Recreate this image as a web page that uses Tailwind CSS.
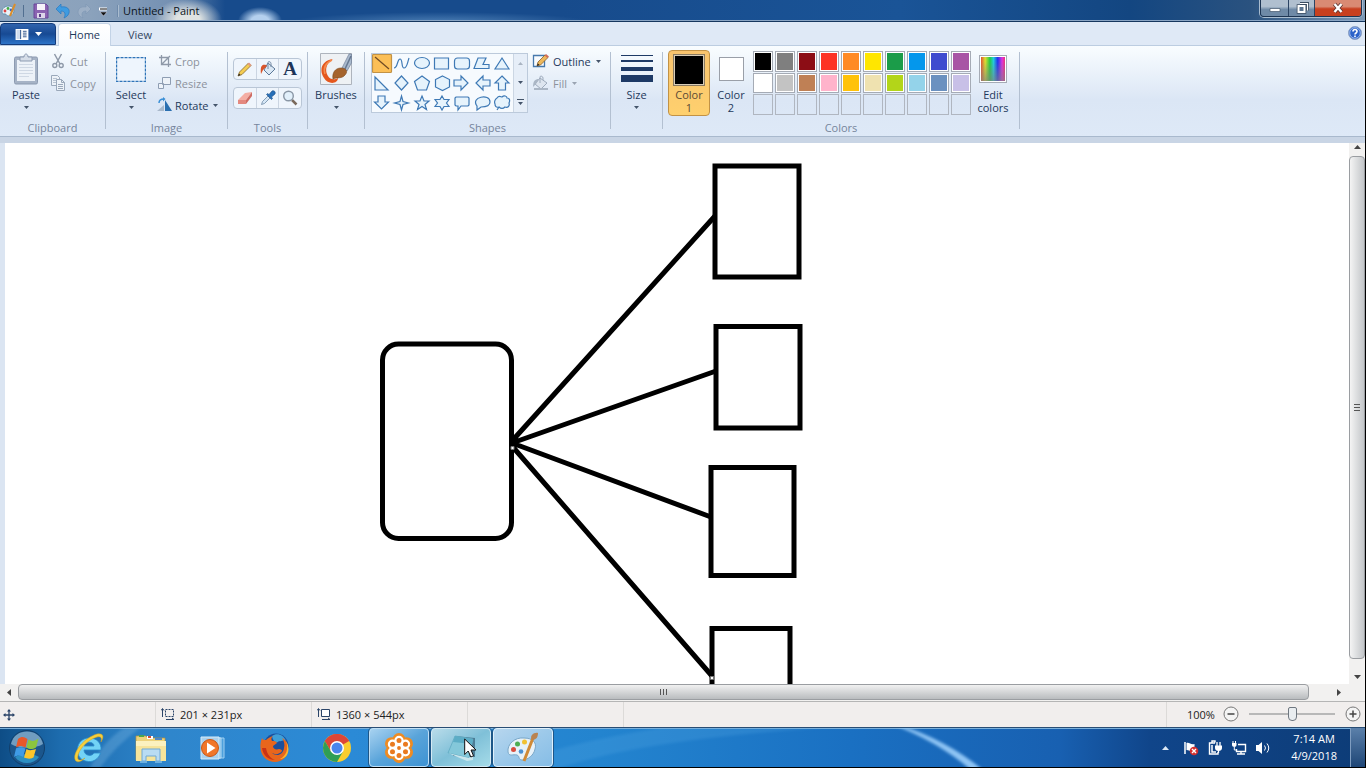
<!DOCTYPE html>
<html lang="en">
<head>
<meta charset="utf-8">
<title>Untitled - Paint</title>
<script src="https://cdn.jsdelivr.net/npm/@tailwindcss/browser@4"></script>
</head>
<body class="bg-black">
<div class="flex h-screen flex-col overflow-hidden bg-black font-['Open_Sans',sans-serif] text-[11px] leading-[13px] text-[#1e395b] select-none">
<div class="mr-px flex min-h-0 flex-1 flex-col">

  <!-- Title bar -->
  <header class="flex h-[22px] shrink-0 items-center overflow-hidden border-b border-[#16375f] bg-[radial-gradient(ellipse_34px_22px_at_188px_20px,#dfe3e2_35%,transparent),radial-gradient(ellipse_22px_14px_at_260px_21px,#b4d0ee_40%,transparent),radial-gradient(ellipse_150px_10px_at_440px_22px,#4b7db3,transparent),linear-gradient(90deg,#8fa5bd,#8ba2bc_90px,#7591b3_170px,#174b8c_225px,#174b8c_560px,#1a5497_900px,#134681_1130px,#2a527f_1250px,#7c98b5)] shadow-[inset_0_-1px_0_#8aa5c4]">
    <svg class="ml-px h-4 w-4" viewBox="0 0 16 16"><path d="M1 9c0-4 3-6 7-6 3 0 5 2 5 5s-3 5-6 5c-2 0-1-2-3-2S1 11 1 9z" fill="#e9f2f8" stroke="#6592b1"/><circle cx="4" cy="8" r="1.400" fill="#d44"/><circle cx="7" cy="5.500" r="1.400" fill="#4a4"/><circle cx="10" cy="7" r="1.400" fill="#36c"/><path d="M14 1 9 13" stroke="#d98d2c" stroke-width="2"/></svg>
    <span class="ml-1.5 h-3 w-px bg-[#526f90]"></span>
    <button aria-label="Save" class="ml-[9px]"><svg class="h-4 w-4" viewBox="0 0 16 16"><path d="M1 1h12l2 2v12H1z" fill="#8b63b1" stroke="#69469a"/><path d="M4 1h8v6H4z" fill="#f5f2fa"/><path d="M4 10h8v5H4z" fill="#ddd5ea"/><path d="M6 11h2v3H6z" fill="#5b3d88"/></svg></button>
    <button aria-label="Undo" class="ml-1.5"><svg class="h-4 w-4" viewBox="0 0 16 16"><path d="M1 6 6 1v3c6-1 9 2 8 6-1 3-3 4-5 5 2-4 1-7-3-7v3z" fill="#3f9be0" stroke="#2a78c0" stroke-width=".7"/></svg></button>
    <button aria-label="Redo" class="ml-1.5"><svg class="h-4 w-4" viewBox="0 0 16 16"><path d="M14 6 9 1v3C3 3 1 6 1 10c1 3 3 4 5 5-2-4-1-7 3-7v3z" fill="#9db0c6" stroke="#8098b5" stroke-width=".7"/></svg></button>
    <button aria-label="Customize Quick Access Toolbar" class="ml-[2px]"><svg class="h-4 w-4" viewBox="0 0 16 16"><path d="M4 6h8" stroke="#fff" stroke-width="3"/><path d="M5 6h7" stroke="#111"/><path d="m5 9h7l-3.500 4z" fill="#111" stroke="#dde" stroke-width=".5"/></svg></button>
    <span class="ml-1.5 h-3 w-[2px] border-x border-x-[#6f8aaa] border-r-[#aabccf]"></span>
    <h1 class="ml-1 flex-1 text-[#0c1420]">Untitled - Paint</h1>
    <div class="mr-[3px] flex h-[17px] self-start overflow-hidden rounded-b border border-t-0 border-[#1d3553] shadow-[0_0_0_1px_#a9bccf]">
      <button aria-label="Minimize" class="flex w-7 items-center justify-center border-r border-[#2b4363] bg-linear-to-b from-[#b0bfcf] from-40% to-[#6f8aa7] to-60%"><svg class="h-4 w-4" viewBox="0 0 16 16"><path d="M3 8.500h10v3H3z" fill="#fff" stroke="#44566c" stroke-width=".7"/></svg></button>
      <button aria-label="Restore" class="flex w-[26px] items-center justify-center border-r border-[#2b4363] bg-linear-to-b from-[#b0bfcf] from-40% to-[#6f8aa7] to-60%"><svg class="h-4 w-4" viewBox="0 0 16 16"><path d="M6 3.500h7.500v7" fill="none" stroke="#3c4e63" stroke-width="3"/><path d="M6 3.500h7.500v7" fill="none" stroke="#fff" stroke-width="1.200"/><path d="M4.500 6h6v6h-6z" fill="none" stroke="#3c4e63" stroke-width="3.600"/><path d="M4.500 6h6v6h-6z" fill="#5c7590" stroke="#fff" stroke-width="2"/></svg></button>
      <button aria-label="Close" class="flex w-[46px] items-center justify-center bg-linear-to-b from-[#d98a73] from-40% to-[#c8401f] to-55%"><svg class="h-4 w-4" viewBox="0 0 16 16"><path d="m4.500 4 7 8m0-8-7 8" stroke="#5c3430" stroke-width="4"/><path d="m4.500 4 7 8m0-8-7 8" stroke="#fff" stroke-width="2.400"/></svg></button>
    </div>
  </header>

  <!-- Ribbon tabs -->
  <nav class="flex h-6 shrink-0 items-end border-b border-[#bccde1] bg-[#dfe9f6]">
    <button aria-label="Paint menu" class="flex h-[22px] w-14 items-center justify-center gap-1.5 rounded-t-sm border border-[#143c7c] bg-linear-to-b from-[#2f63ad] via-[#174a94] to-[#2d74c8]">
      <svg class="h-[11px] w-[14px]" viewBox="0 0 14 12"><path d="M0 0h14v12H0z" fill="#fff"/><path d="M1 1h5v10H1z" fill="#cfdcee"/><path d="M8 2.500h4m-4 2h4m-4 2h4m-4 2h4M5.500 1v10" stroke="#264d86"/></svg>
      <svg class="h-1 w-[7px]" viewBox="0 0 7 4"><path d="M0 0h7L3.500 4z" fill="#fff"/></svg>
    </button>
    <button class="-mb-px ml-[2px] h-[23px] w-[53px] rounded-t-sm border border-b-0 border-[#c3d3e6] bg-linear-to-b from-white to-[#f8fbfe] pb-[2px]">Home</button>
    <button class="h-[22px] w-[58px] text-[#34465f]">View</button>
    <button aria-label="Help" class="mr-[3px] mb-[5px] ml-auto"><svg class="h-[14px] w-[14px]" viewBox="0 0 14 14"><circle cx="7" cy="7" r="6.500" fill="#2b62c9" stroke="#8fa3c4"/><circle cx="7" cy="7" r="5.300" fill="none" stroke="#b5cdf2" stroke-width=".8"/><path d="M5 5.500c0-2.600 4-2.600 4 0C9 7 7 7 7 8.500M7 9.500V11" fill="none" stroke="#fff" stroke-width="1.600"/></svg></button>
  </nav>

  <!-- Ribbon -->
  <section aria-label="Home ribbon" class="flex h-[91px] shrink-0 border-b border-[#a9b9cd] bg-linear-to-b from-[#f9fdff] via-[#dbe6f5] via-60% to-[#dee9f7] pt-1">
    <div class="flex w-[105px] flex-col">
      <div class="flex h-[70px]">
        <button class="ml-1.5 flex w-10 flex-col items-center">
          <span class="flex h-[38px] items-center"><svg class="h-8 w-[26px]" viewBox="0 0 26 32"><rect x="1.500" y="4" width="23" height="27" rx="1.500" fill="#a6b3c6" stroke="#8d9bb1"/><path d="M4 7h18v21H4z" fill="#edf2f8"/><path d="M6 11.500h14m-14 3h14m-14 3h14m-14 3h14m-14 3h10" stroke="#cfd8e4"/><path d="M7 4h4c0-4 4-4 4 0h4v4H7z" fill="#d5dde8" stroke="#8d9bb1"/></svg></span>
          <span>Paste</span>
          <span class="flex h-3 items-center"><svg class="h-[3px] w-[5px]" viewBox="0 0 5 3"><path d="M0 0h5L2.500 3z" fill="#44546a"/></svg></span>
        </button>
        <div class="ml-1 flex flex-col text-[#8c929c]">
          <button class="flex h-[22px] items-center gap-1"><svg class="h-4 w-4" viewBox="0 0 16 16"><path d="m4.500 1 5.500 10M11.500 1 6 11" stroke="#8e99a8" stroke-width="1.500"/><circle cx="4.800" cy="12.500" r="2" fill="none" stroke="#8e99a8" stroke-width="1.400"/><circle cx="11.200" cy="12.500" r="2" fill="none" stroke="#8e99a8" stroke-width="1.400"/></svg>Cut</button>
          <button class="flex h-[22px] items-center gap-1"><svg class="h-4 w-4" viewBox="0 0 16 16"><path d="M1.500.500h6l2 2v8h-8z" fill="#edf2f8" stroke="#9aa8ba"/><path d="M3 3.500h4m-4 2h4m-4 2h3" stroke="#b8c3d1"/><path d="M6.500 4.500h5l3 3v8h-8z" fill="#edf2f8" stroke="#9aa8ba"/><path d="M11.500 4.500v3h3M8 9.500h5m-5 2h5m-5 2h5" fill="none" stroke="#9aa8ba"/></svg>Copy</button>
        </div>
      </div>
      <div class="text-center leading-4 text-[#76859c]">Clipboard</div>
    </div>
    <span class="mt-[2px] h-[77px] w-px bg-[#b3c0d1]"></span>

    <div class="flex w-[121px] flex-col">
      <div class="flex h-[70px]">
        <button class="ml-1 flex w-[42px] flex-col items-center">
          <span class="flex h-[38px] items-center"><svg class="h-[25px] w-[30px]" viewBox="0 0 30 25"><path d="M.500.500h29v24H.500z" fill="#eef5fd" stroke="#2f74b8" stroke-width="1.400" stroke-dasharray="3 1"/></svg></span>
          <span>Select</span>
          <span class="flex h-3 items-center"><svg class="h-[3px] w-[5px]" viewBox="0 0 5 3"><path d="M0 0h5L2.500 3z" fill="#44546a"/></svg></span>
        </button>
        <div class="ml-[5px] flex flex-col text-[#8c929c]">
          <button class="flex h-[22px] items-center gap-[2px]"><svg class="h-4 w-4" viewBox="0 0 16 16"><path d="M4.500 2v9.500H14M2 4.500h9.500V14M5 11l8-8" fill="none" stroke="#8e99a8" stroke-width="1.300"/></svg>Crop</button>
          <button class="flex h-[22px] items-center gap-[2px]"><svg class="h-4 w-4" viewBox="0 0 16 16"><path d="M5.500 2.500h8v7h-8zM1.500 8.500h5v5h-5z" fill="#edf2f8" stroke="#8e9db2"/></svg>Resize</button>
          <button class="flex h-[22px] items-center gap-[2px] text-[#1e395b]"><svg class="h-4 w-4" viewBox="0 0 16 16"><path d="M8 3v11h7z" fill="#2a6fb0"/><path d="M0 14h7V8z" fill="#a9b9cb"/><path d="M2 6c0-4 3-4 5-4" fill="none" stroke="#3a8fd6" stroke-width="1.500"/><path d="M6 0v4.500L8.500 2z" fill="#3a8fd6"/></svg>Rotate<svg class="ml-[2px] h-[3px] w-[5px]" viewBox="0 0 5 3"><path d="M0 0h5L2.500 3z" fill="#44546a"/></svg></button>
        </div>
      </div>
      <div class="text-center leading-4 text-[#76859c]">Image</div>
    </div>
    <span class="mt-[2px] h-[77px] w-px bg-[#b3c0d1]"></span>

    <div class="flex w-[79px] flex-col">
      <div class="flex h-[70px] flex-col items-center gap-[7px] pt-2">
        <div class="flex h-[22px] w-[69px] divide-x divide-[#cbd5e2] rounded-sm border border-[#b9c6d6] bg-[#eff5fc]">
          <button aria-label="Pencil" class="flex flex-1 items-center justify-center"><svg class="h-4 w-4" viewBox="0 0 16 16"><path d="m1 15 1.500-4 9-9 2.500 2.500-9 9z" fill="#f4cc52" stroke="#85672c" stroke-width=".8"/><path d="m12 1.500 2.500 2.500-1.500 1.500L10.500 3z" fill="#e29a82"/><path d="m1 15 1-2.500 1.500 1.500z" fill="#222"/></svg></button>
          <button aria-label="Fill with color" class="flex flex-1 items-center justify-center"><svg class="h-4 w-4" viewBox="0 0 16 16"><path d="m8 2 7 6-6 6-5-5z" fill="#dbe8f5" stroke="#5b7898"/><path d="M8 8V1.500c0-1.500 3-1 3 1V6" fill="none" stroke="#758ba5"/><path d="M6 4C2 3 0 5 1 13l2-4 4-4z" fill="#d9552b"/></svg></button>
          <button aria-label="Text" class="flex flex-1 items-center justify-center font-['Liberation_Serif',serif] text-[19px] leading-5 font-bold text-[#1d3458]">A</button>
        </div>
        <div class="flex h-[22px] w-[69px] divide-x divide-[#cbd5e2] rounded-sm border border-[#b9c6d6] bg-[#eff5fc]">
          <button aria-label="Eraser" class="flex flex-1 items-center justify-center"><svg class="h-4 w-4" viewBox="0 0 16 16"><path d="m1 10 7-7 7-1-6 8z" fill="#f4aea4"/><path d="M1 10h8v4H1z" fill="#e4897f"/><path d="m9 10 6-8v4l-6 8z" fill="#cf6c63"/></svg></button>
          <button aria-label="Color picker" class="flex flex-1 items-center justify-center"><svg class="h-4 w-4" viewBox="0 0 16 16"><path d="m1.500 14.500 1-3L8 6l2 2-5.500 5.500z" fill="#d5e6f5" stroke="#6e8aa6" stroke-width=".8"/><path d="m6.500 4.500 1-1 1.500 1L12 1c2-1 4 1 3 3l-3.500 3 1 1.500-1 1z" fill="#2870b8" stroke="#1d4e85" stroke-width=".6"/></svg></button>
          <button aria-label="Magnifier" class="flex flex-1 items-center justify-center"><svg class="h-4 w-4" viewBox="0 0 16 16"><path d="m10 10 4.500 4.500" stroke="#7a6a5c" stroke-width="2.500"/><circle cx="6.500" cy="6" r="4.800" fill="#e2f0fb" stroke="#8996a5" stroke-width="1.400"/></svg></button>
        </div>
      </div>
      <div class="text-center leading-4 text-[#76859c]">Tools</div>
    </div>
    <span class="mt-[2px] h-[77px] w-px bg-[#b3c0d1]"></span>

    <button class="flex w-14 flex-col items-center">
      <span class="flex h-[38px] items-center"><svg class="h-8 w-8" viewBox="0 0 32 32"><path d="M.500.500h31v31H.500z" fill="#eef1f4" stroke="#aeb4bd"/><path d="M13 6C3 7-2 16 4 25c4 7 14 6 14 0-3 2-8 2-10-2C4 17 7 9 13 6z" fill="#e4571e"/><path d="M12 7c-6 3-9 8-7 14" stroke="#f48a4d" stroke-width="1.500" fill="none"/><path d="M22 15 29 1h2.500v9L27 18z" fill="#a9b9cd" stroke="#64758e" stroke-width=".6"/><path d="m25 16 6-13" stroke="#657790" stroke-width="1.500"/><path d="M13 26c-1-6 2-11 8-11 6 0 7 4 4 7-3 4-8 2-12 4z" fill="#a5632c" stroke="#7a4518" stroke-width=".6"/></svg></span>
      <span>Brushes</span>
      <span class="flex h-3 items-center"><svg class="h-[3px] w-[5px]" viewBox="0 0 5 3"><path d="M0 0h5L2.500 3z" fill="#44546a"/></svg></span>
    </button>
    <span class="mt-[2px] h-[77px] w-px bg-[#b3c0d1]"></span>

    <div class="flex w-[245px] flex-col">
      <div class="flex h-[70px]">
        <div class="mt-[3px] ml-1.5 flex h-[60px] w-[157px] shrink-0 border border-[#bccadb] bg-[#f6fafe]">
          <svg role="img" aria-label="Shapes: line selected" class="h-[58px] w-[141px] shrink-0" viewBox="0 0 141 58" fill="#e6f3fc" stroke="#3e79b5" stroke-width="1.200">
            <rect x=".500" y=".500" width="19" height="18" rx="1" fill="#fbbf57" stroke="#c29245"/>
            <path d="m3 3 14 12" stroke="#6f4a24"/>
            <path d="M22 14c4 0 3-9 6-9s1 9 4 9 3-4 5-10" fill="none"/>
            <ellipse cx="50" cy="9" rx="7.500" ry="5.500"/>
            <path d="M62.500 4h14v11h-14z"/>
            <rect x="82.500" y="4" width="15" height="11" rx="3"/>
            <path d="M102 14.500 106 4h8l-3 6.500h6v4z"/>
            <path d="m130 4 7 11h-14z"/>
            <path d="M3 23v13h13z"/>
            <path d="m29.500 22 6.500 7-6.500 7-6.500-7z"/>
            <path d="m50 22 7.500 5.500-3 8.500h-9l-3-8.500z"/>
            <path d="m70.500 22 7 3.500v7.500l-7 3.500-7-3.500v-7.500z"/>
            <path d="M82 26h7v-4l7 7-7 7v-4h-7z"/>
            <path d="M118 26h-7v-4l-7 7 7 7v-4h7z"/>
            <path d="m130 22 7 7h-3.500v7h-7v-7H123z"/>
            <path d="M6 42h7v6h3.500l-7 7-7-7H6z"/>
            <path d="m29.500 42 1.500 5.500 5.500 1.500-5.500 1.500-1.500 5.500-1.500-5.500-5.500-1.500 5.500-1.500z"/>
            <path d="m50 42 2 5h5l-4 3.500 1.500 5-4.500-3-4.500 3 1.500-5-4-3.500h5z"/>
            <path d="m70 42 2 3.500h5L74.500 49l2.500 3.500h-5L70 56l-2-3.500h-5l2.500-3.500-2.500-3.500h5z"/>
            <path d="M84 43h12l1 1v7l-1 1h-7l-3 4v-4h-2l-1-1v-7z"/>
            <path d="M105 52c-7-9 13-13 13-4 0 4-4 5-9 5l-4 3z"/>
            <path d="M125 44c2-3 4-1 5-1 2-2 5-1 5 1 3 0 3 3 2 5 1 3-1 5-4 4-2 2-4 2-6 0-3 1-4-1-4-3-1-2 0-5 2-6zM127 53l-2 3"/>
          </svg>
          <div class="flex flex-1 flex-col border-l border-[#cbd6e3] bg-[#e6eef8]">
            <button aria-label="Scroll shapes up" class="flex flex-1 items-center justify-center"><svg class="h-[3px] w-[5px]" viewBox="0 0 5 3"><path d="M0 3h5L2.500 0z" fill="#a9b4c2"/></svg></button>
            <button aria-label="Scroll shapes down" class="flex flex-1 items-center justify-center"><svg class="h-[3px] w-[5px]" viewBox="0 0 5 3"><path d="M0 0h5L2.500 3z" fill="#44546a"/></svg></button>
            <button aria-label="More shapes" class="flex flex-1 items-center justify-center"><svg class="h-[6px] w-[7px]" viewBox="0 0 7 6"><path d="M0 0h7v1H0zM1 3h5L3.500 6z" fill="#44546a"/></svg></button>
          </div>
        </div>
        <div class="ml-1 flex flex-col">
          <button class="flex h-[22px] items-center gap-[3px]"><svg class="h-4 w-[18px]" viewBox="0 0 18 16"><path d="M1.500 2.500h11v11h-11z" fill="#f8fbfe" stroke="#4679ad" stroke-width="1.300"/><path d="m5 13 1-4 7-7 3 2.500-7.500 7.500z" fill="#eeb85b" stroke="#84602d" stroke-width=".8"/><path d="m14 1 3 2.500-1.500 1.500L12.500 2.500z" fill="#cf6c5a"/><path d="m5 13 .7-2.500 1.800 1.300z" fill="#222"/></svg>Outline<svg class="ml-[2px] h-[3px] w-[5px]" viewBox="0 0 5 3"><path d="M0 0h5L2.500 3z" fill="#44546a"/></svg></button>
          <button class="flex h-[22px] items-center gap-[3px] text-[#8c929c]"><svg class="h-4 w-[18px]" viewBox="0 0 18 16"><path d="m8 3 7 5-6 6-6-5z" fill="#dde5ef" stroke="#9eabbc"/><path d="M8 8V2c0-1.500 3-1 3 1v2" fill="none" stroke="#9eabbc"/><path d="M7 4C3 4 1 6 1 12l3-3z" fill="#aab6c5"/><path d="M2 14h14" stroke="#aab6c5" stroke-width="2"/></svg>Fill<svg class="ml-[2px] h-[3px] w-[5px]" viewBox="0 0 5 3"><path d="M0 0h5L2.500 3z" fill="#9aa4b2"/></svg></button>
        </div>
      </div>
      <div class="text-center leading-4 text-[#76859c]">Shapes</div>
    </div>
    <span class="mt-[2px] h-[77px] w-px bg-[#b3c0d1]"></span>

    <button class="flex w-[51px] flex-col items-center">
      <span class="flex h-[38px] items-center"><svg class="h-7 w-8" viewBox="0 0 32 28"><path d="M0 0h32v1H0zM0 5h32v2H0zM0 12h32v4H0zM0 20h32v7H0z" fill="#1e3a66"/></svg></span>
      <span>Size</span>
      <span class="flex h-3 items-center"><svg class="h-[3px] w-[5px]" viewBox="0 0 5 3"><path d="M0 0h5L2.500 3z" fill="#44546a"/></svg></span>
    </button>
    <span class="mt-[2px] h-[77px] w-px bg-[#b3c0d1]"></span>

    <div class="flex w-[356px] flex-col">
      <div class="flex h-[70px]">
        <button class="ml-[5px] flex h-[66px] w-[42px] flex-col items-center rounded-sm border border-[#c29245] bg-linear-to-b from-[#f9c46e] to-[#fed06e] text-[#5b4a35]">
          <span class="flex h-[37px] items-center"><span class="h-8 w-8 border border-[#8a7a60] bg-black shadow-[inset_0_0_0_1px_#d8cdb8]"></span></span>
          <span>Color<br>1</span>
        </button>
        <button class="flex w-[42px] flex-col items-center">
          <span class="flex h-[38px] items-center"><span class="h-6 w-[25px] border border-[#9a9fa8] bg-white"></span></span>
          <span>Color<br>2</span>
        </button>
        <div class="mt-px ml-px grid h-16 grid-cols-10 grid-rows-3 gap-x-[2px] gap-y-px">
          <button aria-label="Black" class="w-5 border border-[#a5abb5] bg-black shadow-[inset_0_0_0_1px_#fff]"></button>
          <button aria-label="Gray 50%" class="w-5 border border-[#a5abb5] bg-[#7f7f7f] shadow-[inset_0_0_0_1px_#fff]"></button>
          <button aria-label="Dark red" class="w-5 border border-[#a5abb5] bg-[#8c0d15] shadow-[inset_0_0_0_1px_#fff]"></button>
          <button aria-label="Red" class="w-5 border border-[#a5abb5] bg-[#fd3324] shadow-[inset_0_0_0_1px_#fff]"></button>
          <button aria-label="Orange" class="w-5 border border-[#a5abb5] bg-[#ff8a24] shadow-[inset_0_0_0_1px_#fff]"></button>
          <button aria-label="Yellow" class="w-5 border border-[#a5abb5] bg-[#ffe600] shadow-[inset_0_0_0_1px_#fff]"></button>
          <button aria-label="Green" class="w-5 border border-[#a5abb5] bg-[#1b9c49] shadow-[inset_0_0_0_1px_#fff]"></button>
          <button aria-label="Turquoise" class="w-5 border border-[#a5abb5] bg-[#0497ec] shadow-[inset_0_0_0_1px_#fff]"></button>
          <button aria-label="Indigo" class="w-5 border border-[#a5abb5] bg-[#3f4bcf] shadow-[inset_0_0_0_1px_#fff]"></button>
          <button aria-label="Purple" class="w-5 border border-[#a5abb5] bg-[#a854a5] shadow-[inset_0_0_0_1px_#fff]"></button>
          <button aria-label="White" class="w-5 border border-[#a5abb5] bg-white"></button>
          <button aria-label="Gray 25%" class="w-5 border border-[#a5abb5] bg-[#c3c3c3] shadow-[inset_0_0_0_1px_#fff]"></button>
          <button aria-label="Brown" class="w-5 border border-[#a5abb5] bg-[#bf8055] shadow-[inset_0_0_0_1px_#fff]"></button>
          <button aria-label="Rose" class="w-5 border border-[#a5abb5] bg-[#ffb3cb] shadow-[inset_0_0_0_1px_#fff]"></button>
          <button aria-label="Gold" class="w-5 border border-[#a5abb5] bg-[#ffc20a] shadow-[inset_0_0_0_1px_#fff]"></button>
          <button aria-label="Light yellow" class="w-5 border border-[#a5abb5] bg-[#efe2b0] shadow-[inset_0_0_0_1px_#fff]"></button>
          <button aria-label="Lime" class="w-5 border border-[#a5abb5] bg-[#b3d519] shadow-[inset_0_0_0_1px_#fff]"></button>
          <button aria-label="Light turquoise" class="w-5 border border-[#a5abb5] bg-[#94d3ea] shadow-[inset_0_0_0_1px_#fff]"></button>
          <button aria-label="Blue-gray" class="w-5 border border-[#a5abb5] bg-[#6b91c0] shadow-[inset_0_0_0_1px_#fff]"></button>
          <button aria-label="Lavender" class="w-5 border border-[#a5abb5] bg-[#c8c0e7] shadow-[inset_0_0_0_1px_#fff]"></button>
          <button aria-label="Custom color 1" class="w-5 border border-[#b0b6c0]"></button>
          <button aria-label="Custom color 2" class="w-5 border border-[#b0b6c0]"></button>
          <button aria-label="Custom color 3" class="w-5 border border-[#b0b6c0]"></button>
          <button aria-label="Custom color 4" class="w-5 border border-[#b0b6c0]"></button>
          <button aria-label="Custom color 5" class="w-5 border border-[#b0b6c0]"></button>
          <button aria-label="Custom color 6" class="w-5 border border-[#b0b6c0]"></button>
          <button aria-label="Custom color 7" class="w-5 border border-[#b0b6c0]"></button>
          <button aria-label="Custom color 8" class="w-5 border border-[#b0b6c0]"></button>
          <button aria-label="Custom color 9" class="w-5 border border-[#b0b6c0]"></button>
          <button aria-label="Custom color 10" class="w-5 border border-[#b0b6c0]"></button>
        </div>
        <button class="ml-[2px] flex w-10 flex-col items-center">
          <span class="flex h-[38px] items-center"><span class="h-7 w-7 border border-[#a5abb5] bg-[linear-gradient(0deg,#808080b3,transparent_80%),linear-gradient(90deg,#d33,#dd3_20%,#2c4_38%,#2cd_52%,#23e_68%,#d3d_85%,#e35)] shadow-[inset_0_0_0_1px_#fff]"></span></span>
          <span>Edit<br>colors</span>
        </button>
      </div>
      <div class="text-center leading-4 text-[#76859c]">Colors</div>
    </div>
    <span class="mt-[2px] h-[77px] w-px bg-[#b3c0d1]"></span>
  </section>

  <!-- Work area -->
  <main class="flex min-h-0 flex-1 flex-col bg-[#f0f0f0]">
    <div class="h-1.5 shrink-0 bg-[#c9d5e5]"></div>
    <div class="flex min-h-0 flex-1">
      <div class="min-w-0 flex-1 overflow-hidden border-l-[5px] border-[#dbe5f2] bg-white">
        <svg role="img" aria-label="Drawing: rounded rectangle joined by lines to four rectangles" class="h-[544px] w-[1360px]" viewBox="5 143 1360 544" fill="none" stroke="#000" stroke-width="5">
          <rect x="382.500" y="344" width="129" height="194.500" rx="16"/>
          <path d="M715 166h84v111h-84zM716 326.500h84v101.500h-84zM711 467.500h83v108h-83zM712 700v-71.500h78V700"/>
          <path d="m512 441 203-225M512 443l204-72M512 443l199 74M512 446l200 230"/>
          <path d="M511 446.500h3v3h-3zM710.500 676.500h3v3h-3z" fill="#fff" stroke="#777" stroke-width="1"/>
        </svg>
      </div>
      <div aria-hidden="true" class="flex w-4 shrink-0 flex-col bg-[#f2f1f0]">
        <span class="flex h-[13px] shrink-0 items-start justify-center pt-[2px]"><svg class="h-1 w-[7px]" viewBox="0 0 7 4"><path d="M0 4h7L3.500 0z" fill="#444"/></svg></span>
        <span class="flex flex-1 items-center justify-center rounded-sm border border-[#9a9da1] bg-linear-to-r from-[#f4f4f4] to-[#c3c6c9]"><svg class="h-[7px] w-1.5" viewBox="0 0 6 7"><path d="M0 .500h6M0 3.500h6M0 6.500h6" stroke="#555"/></svg></span>
        <span class="flex h-[25px] items-center justify-center pt-[10px]"><svg class="h-1 w-[7px]" viewBox="0 0 7 4"><path d="M0 0h7L3.500 4z" fill="#444"/></svg></span>
      </div>
    </div>
    <div aria-hidden="true" class="flex h-[17px] shrink-0 bg-[#f2f1f0] pb-px">
      <span class="flex w-[18px] items-center justify-center"><svg class="h-[7px] w-1" viewBox="0 0 4 7"><path d="M4 0v7L0 3.500z" fill="#444"/></svg></span>
      <span class="flex flex-1 items-center justify-center rounded-sm border border-[#9a9da1] bg-linear-to-b from-[#f1f1f1] to-[#b9bcbf]"><svg class="h-1.5 w-[7px]" viewBox="0 0 7 6"><path d="M.500 0v6M3.500 0v6M6.500 0v6" stroke="#555"/></svg></span>
      <span class="flex w-14 items-center justify-center pl-1"><svg class="h-[7px] w-1" viewBox="0 0 4 7"><path d="M0 0v7L4 3.500z" fill="#444"/></svg></span>
    </div>
  </main>

  <!-- Status bar -->
  <footer class="flex h-[26px] shrink-0 items-center border-t border-[#b5b5b5] bg-[#f1eeed] text-[#222]">
    <div class="flex h-full w-[156px] items-center border-r border-[#dcdad8] pl-[3px]"><svg class="h-3 w-3" viewBox="0 0 12 12"><path d="M6 1v10M1 6h10" stroke="#2b4468" stroke-width="1.300"/><path d="M6 0 4 2.500h4zM6 12 4 9.500h4zM0 6l2.500-2v4zM12 6 9.500 4v4z" fill="#2b4468"/></svg></div>
    <div class="flex h-full w-[156px] items-center gap-[5px] border-r border-[#dcdad8] pb-px pl-[5px]"><svg class="h-3 w-[14px]" viewBox="0 0 14 12"><path d="M1.500 1v8M0 2.500 1.500.500 3 2.500M5 11.500h8M11 10l2 1.500" fill="none" stroke="#2b4468"/><path d="M4.500 1.500h8v7h-8z" fill="none" stroke="#2b4468" stroke-dasharray="2 1"/></svg>201 × 231px</div>
    <div class="flex h-full w-[156px] items-center gap-[5px] border-r border-[#dcdad8] pb-px pl-[5px]"><svg class="h-3 w-[14px]" viewBox="0 0 14 12"><path d="M1.500 1v8M0 2.500 1.500.500 3 2.500M5 11.500h8M11 10l2 1.500" fill="none" stroke="#2b4468"/><path d="M4.500 1.500h8v7h-8z" fill="#fff" stroke="#2b4468"/></svg>1360 × 544px</div>
    <div class="h-full w-[156px] border-r border-[#dcdad8]"></div>
    <div class="h-full flex-1 border-r border-[#dcdad8]"></div>
    <div class="flex items-center pr-1 pb-px pl-5">
      <label for="zoom" class="w-9">100%</label>
      <button aria-label="Zoom out"><svg class="h-4 w-4" viewBox="0 0 16 16"><circle cx="8" cy="8" r="7" fill="#f4f4f4" stroke="#777"/><path d="M4.500 8h7" stroke="#444" stroke-width="1.500"/></svg></button>
      <input id="zoom" type="range" min="0" max="100" value="50" class="mx-2.5 h-4 w-[86px] appearance-none bg-transparent [&::-webkit-slider-runnable-track]:h-[2px] [&::-webkit-slider-runnable-track]:bg-[#b8b8b8] [&::-webkit-slider-thumb]:-mt-1.5 [&::-webkit-slider-thumb]:h-[14px] [&::-webkit-slider-thumb]:w-[9px] [&::-webkit-slider-thumb]:appearance-none [&::-webkit-slider-thumb]:rounded-t-xs [&::-webkit-slider-thumb]:rounded-b [&::-webkit-slider-thumb]:border [&::-webkit-slider-thumb]:border-[#6f7780] [&::-webkit-slider-thumb]:bg-[#e9edf0]">
      <button aria-label="Zoom in"><svg class="h-4 w-4" viewBox="0 0 16 16"><circle cx="8" cy="8" r="7" fill="#f4f4f4" stroke="#777"/><path d="M4.500 8h7M8 4.500v7" stroke="#444" stroke-width="1.500"/></svg></button>
    </div>
  </footer>

  <!-- Taskbar -->
  <nav aria-label="Taskbar" class="relative flex h-10 shrink-0 items-stretch overflow-hidden border-t border-[#294d74] bg-[linear-gradient(90deg,#0e4d86,#1d6cae_60px,#2f86cc_170px,#2b8ad6_350px,#2384cf_600px,#1a70c2_850px,#1860b1_1060px,#10458a_1150px,#0d3c77_1366px)] shadow-[inset_0_1px_0_#7ab0dc]">
    <svg aria-hidden="true" class="absolute inset-0 h-10 w-full" viewBox="0 0 1366 40" preserveAspectRatio="xMinYMin slice"><defs><filter id="soft" x="-20%" y="-50%" width="140%" height="200%"><feGaussianBlur stdDeviation="1.500"/></filter></defs><path d="M897-4q50 16 86 46l-12 0q-34-29-80-46z" fill="#8ec4f4" filter="url(#soft)"/><path d="M560 40q80-28 260-40h-160q-100 16-160 40z" fill="#57a9e4" opacity=".25" filter="url(#soft)"/><path d="M100 40q15-22 40-40h-16q-22 14-34 40z" fill="#9ccdf0" opacity=".25" filter="url(#soft)"/></svg>
    <button aria-label="Start" class="relative flex w-[54px] items-center justify-center"><svg class="h-[38px] w-[38px]" viewBox="0 0 38 38"><circle cx="19" cy="19" r="17.500" fill="#1b568c" stroke="#113f6b"/><path d="M3 15C5 6 12 2.500 19 2.500S33 6 35 15c-8 5-24 5-32 0z" fill="#8fb5d2" opacity=".75"/><path d="M7 28c6 8 18 8 24 0-6-4-18-4-24 0z" fill="#37b4e6" opacity=".6"/><path d="M10 10c4-3 6-2 9.500 0l-2 8.500c-4-2-6-2-9.500 0z" fill="#e8582a"/><path d="M20.500 10.500c3 2 6 2 10-1l-2.500 9c-4 2-6 2-9.500 0z" fill="#8cc63e"/><path d="M8 19.500c4-2 6-1 9.500 0l-2.500 8.500c-3-2-5-2-9 0z" fill="#3f9be6"/><path d="M18.500 20c3 2 6 1 9.500 0l-2.500 8.500c-4 2-6 1-9.500 0z" fill="#fbc52c"/></svg></button>
    <div class="relative ml-[5px] flex gap-[2px]">
      <button aria-label="Internet Explorer" class="flex w-[60px] items-center justify-center"><svg class="h-8 w-8" viewBox="0 0 32 32"><path d="M28 18H11c0 6 8 7 10 3h6.500c-2 6-7 9-12 8.500C8 29 4 24 4.500 17 5 10 10 6 16 6c8 0 12.500 5 12 12zm-7-4c0-5-9-5-10 0z" fill="#72d3f6" stroke="#2a8ccb" stroke-width=".8"/><path d="M3 29C-2 24 8 7 24 2c7-1 7 3 4 8 1-4 0-6-4-5C13 8 3 21 5 27c1 2 4 1 7-1-3 3-7 5-9 3z" fill="#f6cf3c" stroke="#cfa020" stroke-width=".5"/></svg></button>
      <button aria-label="Windows Explorer" class="flex w-[60px] items-center justify-center"><svg class="h-8 w-8" viewBox="0 0 32 32"><path d="M1 4h10l2 2h17v22H1z" fill="#ecd27b" stroke="#b7933b" stroke-width=".7"/><path d="M4 3h5v2H4z" fill="#4aa54c"/><path d="M12 4h6v3h-6z" fill="#fff"/><path d="M13 4h3v2h-3z" fill="#d24c38"/><path d="M20 6h7v2h-7z" fill="#4d86c7"/><path d="M1 9h30v20H1z" fill="#f6e49b"/><path d="M1 9h30v5H1z" fill="#fbf1bf"/><path d="M7 17h18v12h-4v-5H11v5H7z" fill="#b9dcf3" stroke="#70a9d4"/><path d="M5 29h7v2H5zM20 29h7v2h-7z" fill="#6cb0df"/></svg></button>
      <button aria-label="Windows Media Player" class="flex w-[60px] items-center justify-center"><svg class="h-7 w-7" viewBox="0 0 28 28"><path d="M10 4h15v20H10z" fill="#4da0dc" stroke="#9fd0f2"/><path d="M6 4h16v20H6z" fill="#76b8e6" stroke="#b5dcf5"/><path d="M2 3h18v22H2z" fill="#a9d1ee" stroke="#d6ecfa"/><circle cx="11" cy="14" r="8.500" fill="#f0762a" stroke="#c85716"/><path d="M8 8.500v11l8.500-5.500z" fill="#fff"/></svg></button>
      <button aria-label="Firefox" class="flex w-[60px] items-center justify-center"><svg class="h-8 w-8" viewBox="0 0 32 32"><circle cx="17" cy="14" r="12.500" fill="#1c4f9c"/><path d="M13 4c5-4 12-1 14 5-3-2-4 1-7 0-2 3-6 1-7-5z" fill="#3d9fd8"/><path d="M3 6c1 2 2 2 4 2 2-2 4-3 7-4-2 2-2 3-1 5 2 0 4 0 5 2l-4 3c0 3 3 4 6 3 2 0 3 1 3 2-3 4-8 4-11 1 4 5 12 4 13-4 1-4 0-7-2-10 4 2 6 6 6 10.500C29 25 23 30 16 30S2 25 1.500 16C1 12 2 9 3 6z" fill="#e8661c"/><path d="M27 9c3 8 0 15-6 18 8 0 11-10 6-18z" fill="#fbb530"/><path d="M3 16c1 8 7 12 13 12-5-2-8-6-9-12z" fill="#c93216"/></svg></button>
      <button aria-label="Google Chrome" class="flex w-[60px] items-center justify-center"><svg class="h-[30px] w-[30px]" viewBox="0 0 30 30"><circle cx="15" cy="15" r="14" fill="#f9cd2e"/><path d="M15 15 2.876 8A14 14 0 0 1 27.124 8z" fill="#dc4637"/><path d="M15 8h12.124A14 14 0 0 0 2.876 8L9 18.500z" fill="#dc4637"/><path d="M2.876 8A14 14 0 0 0 15 29l6-10.500-12 0z" fill="#2f9e55"/><circle cx="15" cy="15" r="7" fill="#fff"/><circle cx="15" cy="15" r="5.500" fill="#4a85ed"/></svg></button>
      <button aria-label="GoToMeeting" class="flex w-[60px] items-center justify-center rounded-sm border border-[#c0dff5] bg-linear-to-br from-[#a7d2f0] via-[#59a4da] to-[#3e93d3] shadow-[0_0_0_1px_#1d5688]"><svg class="h-8 w-8" viewBox="0 0 32 32"><g fill="#ef8b22"><circle cx="16" cy="16" r="11"/><circle cx="16" cy="7.500" r="6.500"/><circle cx="23.500" cy="11.700" r="6.500"/><circle cx="23.500" cy="20.300" r="6.500"/><circle cx="16" cy="24.500" r="6.500"/><circle cx="8.500" cy="20.300" r="6.500"/><circle cx="8.500" cy="11.700" r="6.500"/></g><g fill="#e97a20" stroke="#fff" stroke-width="2.200"><circle cx="16" cy="8.500" r="3.600"/><circle cx="22.500" cy="12.200" r="3.600"/><circle cx="22.500" cy="19.800" r="3.600"/><circle cx="16" cy="23.500" r="3.600"/><circle cx="9.500" cy="19.800" r="3.600"/><circle cx="9.500" cy="12.200" r="3.600"/><circle cx="16" cy="16" r="3"/></g></svg></button>
      <button aria-label="Notepad" class="relative flex w-[60px] items-center justify-center rounded-sm border border-[#d5eaf4] bg-linear-to-br from-[#b9dcea] via-[#7fc0d8] to-[#a5dbe8] shadow-[0_0_0_1px_#1d5688]">
        <svg class="h-8 w-9" viewBox="0 0 36 32"><path d="m12 4 20 2v19L10 24z" fill="#4d7d96"/><path d="m12 4 18 3-4 19-21-5z" fill="#84c8da" stroke="#5aa6bf" stroke-width=".7"/><path d="m12 4 18 3-1 5-19-2z" fill="#5cadc6"/><path d="m5 21 21 5 4-5v7l-6 1z" fill="#c9e6ed"/></svg>
        <svg aria-hidden="true" class="absolute top-[9px] left-8 h-[20px] w-[13px]" viewBox="0 0 13 20"><path d="M.700 1v15.500L4.200 13l2.600 6 2.700-1.200L7 12h5z" fill="#fff" stroke="#111"/></svg>
      </button>
      <button aria-label="Paint" class="flex w-[60px] items-center justify-center rounded-sm border border-[#e0f0fb] bg-linear-to-br from-[#b7d6ee] via-[#9cc9ea] to-[#86bde6] shadow-[0_0_0_1px_#1d5688]"><svg class="h-8 w-8" viewBox="0 0 32 32"><path d="M1 20C0 12 8 5 17 6c9 0 13 5 11 11-1 6-7 11-13 11-4 0-2-4-5-5-4-1-8 2-9-3z" fill="#e7f2f9" stroke="#7aa7c7"/><circle cx="6.500" cy="17.500" r="2.500" fill="#d94d3f"/><circle cx="10.500" cy="12" r="2.500" fill="#4fae52"/><circle cx="17.500" cy="10" r="2.500" fill="#f1c232"/><circle cx="14" cy="19.500" r="2.300" fill="#4a90d2"/><path d="M26 6 17 29" stroke="#d08a36" stroke-width="3"/><path d="M25 8c-3-4 2-8 6-7 0 3-1 7-6 7z" fill="#b98350"/></svg></button>
    </div>
    <div class="relative ml-auto flex items-center text-white">
      <button aria-label="Show hidden icons" class="mr-2.5 flex w-4 justify-center"><svg class="h-1 w-[7px]" viewBox="0 0 7 4"><path d="M0 4h7L3.500 0z" fill="#dce8f5"/></svg></button>
      <button aria-label="Action Center" class="mr-2"><svg class="h-4 w-4" viewBox="0 0 16 16"><path d="M2 2v12" stroke="#fff" stroke-width="1.500"/><path d="M3.500 3c3-1 4 2 8 1v7c-4 1-5-1-8-1z" fill="#fff"/><circle cx="11" cy="11" r="4.300" fill="#d33030"/><path d="m9 9 4 4m0-4-4 4" stroke="#fff" stroke-width="1.400"/></svg></button>
      <button aria-label="Power" class="mr-2"><svg class="h-4 w-4" viewBox="0 0 16 16"><path d="M5 2.500V1h3v1.500M8 3H2.500v11H11v-2" fill="none" stroke="#fff" stroke-width="1.400"/><path d="M5 5v7h4" fill="none" stroke="#fff" stroke-width="1.500"/><path d="M8 5.500h7V8c0 2-1.500 3-3.500 3S8 10 8 8z" fill="#fff"/><path d="M10 2v4M13 2v4M11.500 10v3" stroke="#fff" stroke-width="1.300"/></svg></button>
      <button aria-label="Network" class="mr-2"><svg class="h-4 w-4" viewBox="0 0 16 16"><path d="M7 4.500h7.500v7h-9V9M10 12v2m-4 0h8" fill="none" stroke="#fff" stroke-width="1.400"/><path d="M1 3h4.500v2c0 1-1 2-2.200 2S1 6 1 5z" fill="#fff"/><path d="M2 1v2.500M4.500 1v2.500M3.300 7v3H6" fill="none" stroke="#fff"/></svg></button>
      <button aria-label="Volume" class="mr-5"><svg class="h-4 w-4" viewBox="0 0 16 16"><path d="M1 5h2.500L7 2v12L3.500 11H1z" fill="#fff"/><path d="M9.500 5.500q2 2.500 0 5M12 3.500q3.500 4.500 0 9" fill="none" stroke="#fff"/></svg></button>
      <time class="mr-[13px] pb-[2px] text-center leading-[17px]">7:14 AM<br>4/9/2018</time>
      <button aria-label="Show desktop" class="h-full w-[15px] border-l border-[#7f9dc0] bg-linear-to-b from-[#5b80aa] to-[#1e4676]"></button>
    </div>
  </nav>
</div>
<div class="h-px shrink-0 bg-black"></div>
</div>
</body>
</html>
